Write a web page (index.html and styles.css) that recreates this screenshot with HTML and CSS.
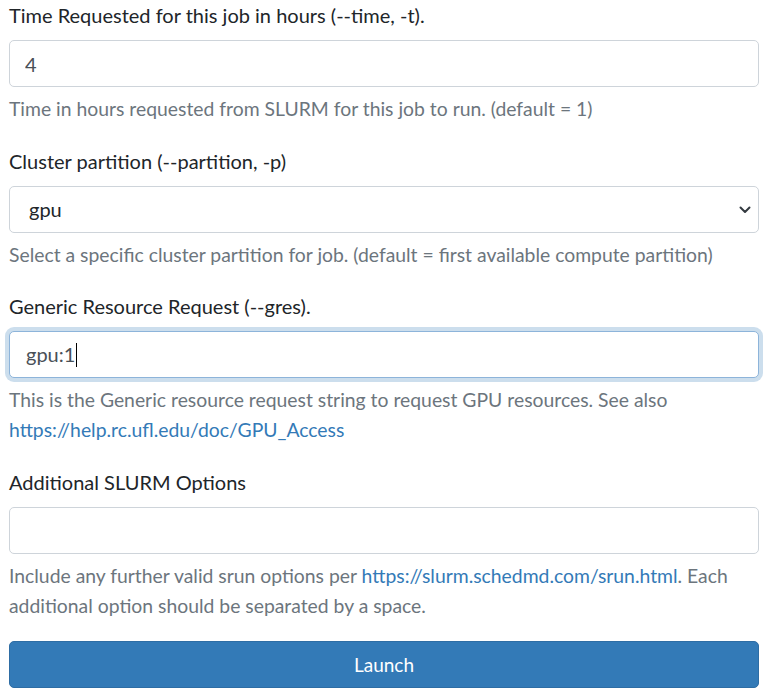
FILE: index.html
```html
<!DOCTYPE html>
<html lang="en">
<head>
<meta charset="utf-8">
<title>Job form</title>
<link rel="stylesheet" href="styles.css">
</head>
<body>
<form class="form">
  <div class="group">
    <label class="label" for="time">Time Requested for this job in hours (--time, -t).</label>
    <input class="control" id="time" type="text" value="4">
    <div class="help">Time in hours requested from SLURM for this job to run. (default = 1)</div>
  </div>
  <div class="group">
    <label class="label" for="part">Cluster partition (--partition, -p)</label>
    <div class="select-wrap">
      <select class="control select" id="part"><option>gpu</option></select>
      <svg class="chevron" width="12" height="8" viewBox="0 0 12 8"><path d="M1.5 1.5 6 6l4.5-4.5" fill="none" stroke="#343a40" stroke-width="2" stroke-linecap="round" stroke-linejoin="round"/></svg>
    </div>
    <div class="help">Select a specific cluster partition for job. (default = first available compute partition)</div>
  </div>
  <div class="group">
    <label class="label">Generic Resource Request (--gres).</label>
    <div class="control focused">gpu:1<span class="caret"></span></div>
    <div class="help">This is the Generic resource request string to request GPU resources. See also <a href="#">https://help.rc.ufl.edu/doc/GPU_Access</a></div>
  </div>
  <div class="group">
    <label class="label" for="extra">Additional SLURM Options</label>
    <input class="control" id="extra" type="text" value="">
    <div class="help">Include any further valid srun options per <a href="#">https://slurm.schedmd.com/srun.html</a>. Each additional option should be separated by a space.</div>
  </div>
  <button class="btn" type="button">Launch</button>
</form>
</body>
</html>
```

FILE: styles.css
```css
* { box-sizing: border-box; }
html, body { margin: 0; background: #fff; }
body {
  font-family: "Segoe UI", Lato, "Open Sans", sans-serif;
  font-size: 20px;
  line-height: 30px;
  color: #212529;
}
.form {
  padding: 0 12px 0 9px;
  display: flex;
  flex-direction: column;
}
.group {
  display: flex;
  flex-direction: column;
  margin-bottom: 21.6px;
}
.label {
  display: block;
  margin-bottom: 10px;
}
.control {
  display: block;
  width: 100%;
  height: 47px;
  padding: 0 15px;
  font: inherit;
  line-height: 45px;
  color: #495057;
  background: #fff;
  border: 1px solid #ced4da;
  border-radius: 5px;
  outline: none;
}
.select-wrap { position: relative; }
.select {
  appearance: none;
  -webkit-appearance: none;
  padding-left: 19px;
  color: #212529;
}
.chevron {
  position: absolute;
  right: 8px;
  top: 20px;
  pointer-events: none;
}
.focused {
  border-color: #8db4da;
  box-shadow: 0 0 0 4px rgba(51, 122, 183, 0.25);
  padding-left: 16px;
  color: #495057;
}
.caret {
  display: inline-block;
  width: 1px;
  height: 24px;
  background: #000;
  vertical-align: middle;
  margin-left: 1px;
  position: relative;
  top: -2px;
}
.help {
  margin-top: 7px;
  color: #6c757d;
  font-size: 19.35px;
}
.help a {
  color: #337ab7;
  text-decoration: none;
}
.btn {
  display: block;
  width: 100%;
  height: 47px;
  margin-top: -1px;
  font: inherit;
  font-size: 19px;
  color: #fff;
  background: #337ab7;
  border: 1px solid #2e6da4;
  border-radius: 5px;
}
```
